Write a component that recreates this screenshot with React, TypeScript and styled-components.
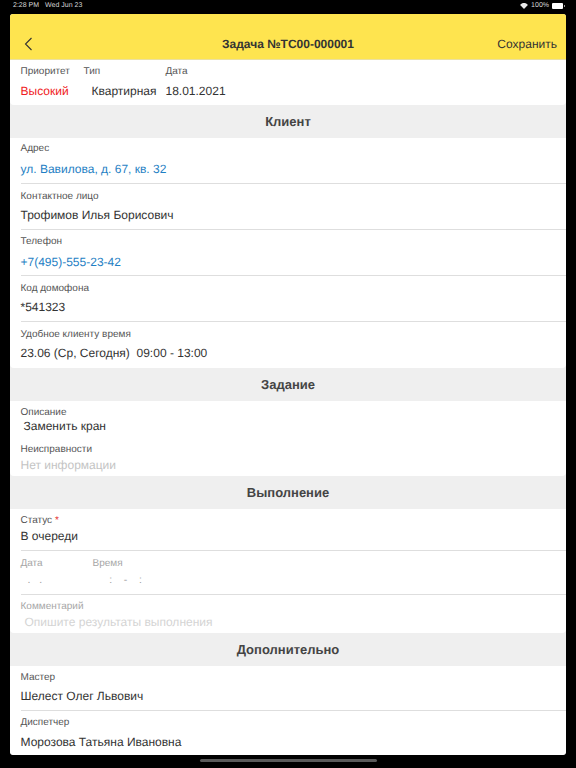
import React from 'react'
import styled, { createGlobalStyle } from 'styled-components'

const GlobalStyle = createGlobalStyle`
  html, body {
    margin: 0;
    padding: 0;
    background: #000000;
    font-family: "Liberation Sans", Arial, sans-serif;
    text-rendering: geometricPrecision;
  }
`

const Screen = styled.div`
  width: 576px;
  height: 768px;
  background: #000000;
  display: flex;
  flex-direction: column;
  overflow: hidden;
`

const StatusBar = styled.div`
  height: 14px;
  flex: none;
  box-sizing: border-box;
  padding: 0 13px 3px 13px;
  display: flex;
  align-items: center;
  justify-content: space-between;
  color: #d8d8d8;
  font-size: 7px;
`

const StatusGroup = styled.div<{ $gap: number }>`
  display: flex;
  align-items: center;
  gap: ${p => p.$gap}px;
`

const Sheet = styled.div`
  margin: 0 10px;
  height: 741px;
  flex: none;
  background: #efefef;
  border-radius: 3px;
  overflow: hidden;
  display: flex;
  flex-direction: column;
`

const Header = styled.div`
  height: 46px;
  flex: none;
  box-sizing: border-box;
  padding: 14px 9px 0 9px;
  background: #fee44f;
  border-bottom: 1px solid #ebe0a0;
  display: grid;
  grid-template-columns: 1fr auto 1fr;
  align-items: center;
  color: #333333;
`

const BackWrap = styled.div`
  display: flex;
  align-items: center;
  padding-left: 5px;
`

const Title = styled.div`
  font-size: 12px;
  font-weight: 700;
`

const Save = styled.div`
  font-size: 12px;
  text-align: right;
`

const Card = styled.div`
  background: #ffffff;
  flex: none;
  border-radius: 0 0 4px 4px;
  display: flex;
  flex-direction: column;
`

const Heading = styled.div`
  height: 33px;
  flex: none;
  display: flex;
  align-items: center;
  justify-content: center;
  font-size: 13px;
  font-weight: 700;
  color: #444444;
`

const Row = styled.div<{ $h: number; $line?: boolean; $top?: number; $gap?: number }>`
  height: ${p => p.$h}px;
  flex: none;
  box-sizing: border-box;
  margin-left: 10.5px;
  padding-top: ${p => p.$top ?? 7}px;
  border-bottom: ${p => (p.$line ? '1px solid #dedede' : 'none')};
  display: flex;
  flex-direction: column;
  gap: ${p => p.$gap ?? 5}px;
`

const TopRow = styled.div`
  height: 45px;
  box-sizing: border-box;
  padding: 6px 0 0 10.5px;
  display: grid;
  grid-template-columns: 63px 82px 1fr;
  row-gap: 0;
`

const Label = styled.div<{ $muted?: boolean }>`
  font-size: 10px;
  line-height: 12px;
  color: ${p => (p.$muted ? '#a6a6a6' : '#555555')};
`

const Value = styled.div<{ $color?: string; $shift?: number }>`
  font-size: 12px;
  line-height: 15px;
  white-space: pre;
  color: ${p => p.$color ?? '#333333'};
  margin-left: ${p => p.$shift ?? 0}px;
`

const Star = styled.span`
  color: #e53935;
`

const Pair = styled.div`
  display: grid;
  grid-template-columns: 72px 1fr;
`

const Blank = styled.div`
  font-size: 10.5px;
  line-height: 15px;
  color: #a0a0a0;
  white-space: pre;
  padding-left: 7px;
`

const HomeBar = styled.div`
  width: 177px;
  height: 3px;
  margin: 4px auto 0;
  border-radius: 2px;
  background: #5a5a5a;
`

const Battery = styled.div`
  width: 11px;
  height: 6px;
  border-radius: 1px;
  background: #ffffff;
  position: relative;
  &::after {
    content: '';
    position: absolute;
    left: 12px;
    top: 2px;
    width: 1px;
    height: 2px;
    background: #9a9a9a;
  }
`

const Wifi = () => (
  <svg width="8" height="6" viewBox="0 0 18 14" fill="#e8e8e8">
    <path d="M9 14 L0 4.5 C5 -1.5 13 -1.5 18 4.5 Z" />
  </svg>
)

const Back = () => (
  <svg width="9" height="14" viewBox="0 0 9 14" fill="none" stroke="#333333" strokeWidth="1.1">
    <path d="M7.5 1 L1.5 7 L7.5 13" />
  </svg>
)

const BLUE = '#1f7fc4'

const App: React.FC = () => (
  <Screen>
    <GlobalStyle />
    <StatusBar>
      <StatusGroup $gap={6}>
        <span>2:28 PM</span>
        <span>Wed Jun 23</span>
      </StatusGroup>
      <StatusGroup $gap={3}>
        <Wifi />
        <span>100%</span>
        <Battery />
      </StatusGroup>
    </StatusBar>
    <Sheet>
      <Header>
        <BackWrap>
          <Back />
        </BackWrap>
        <Title>Задача №ТС00-000001</Title>
        <Save>Сохранить</Save>
      </Header>
      <Card>
        <TopRow>
          <Label>Приоритет</Label>
          <Label>Тип</Label>
          <Label>Дата</Label>
          <Value $color="#f01c24">Высокий</Value>
          <Value $shift={8}>Квартирная</Value>
          <Value>18.01.2021</Value>
        </TopRow>
      </Card>
      <Heading>Клиент</Heading>
      <Card>
        <Row $h={46} $line $top={5} $gap={7}>
          <Label>Адрес</Label>
          <Value $color={BLUE}>ул. Вавилова, д. 67, кв. 32</Value>
        </Row>
        <Row $h={46} $line>
          <Label>Контактное лицо</Label>
          <Value>Трофимов Илья Борисович</Value>
        </Row>
        <Row $h={46} $line $top={6} $gap={7}>
          <Label>Телефон</Label>
          <Value $color={BLUE}>+7(495)-555-23-42</Value>
        </Row>
        <Row $h={46} $line>
          <Label>Код домофона</Label>
          <Value>*541323</Value>
        </Row>
        <Row $h={46}>
          <Label>Удобное клиенту время</Label>
          <Value>23.06 (Ср, Сегодня)  09:00 - 13:00</Value>
        </Row>
      </Card>
      <Heading>Задание</Heading>
      <Card>
        <Row $h={37} $top={6} $gap={0}>
          <Label>Описание</Label>
          <Value $shift={3}>Заменить кран</Value>
        </Row>
        <Row $h={38} $top={6} $gap={2}>
          <Label>Неисправности</Label>
          <Value $color="#c4c4c4">Нет информации</Value>
        </Row>
      </Card>
      <Heading>Выполнение</Heading>
      <Card>
        <Row $h={42} $line $top={6} $gap={2}>
          <Label>Статус <Star>*</Star></Label>
          <Value>В очереди</Value>
        </Row>
        <Row $h={44} $line $gap={3}>
          <Pair>
            <Label $muted>Дата</Label>
            <Label $muted>Время</Label>
          </Pair>
          <Blank>{'.   .                       :    -    :'}</Blank>
        </Row>
        <Row $h={38} $top={6} $gap={2}>
          <Label $muted>Комментарий</Label>
          <Value $color="#d4d4d4" $shift={4}>Опишите результаты выполнения</Value>
        </Row>
      </Card>
      <Heading>Дополнительно</Heading>
      <Card>
        <Row $h={45} $line $top={6} $gap={5}>
          <Label>Мастер</Label>
          <Value>Шелест Олег Львович</Value>
        </Row>
        <Row $h={44} $top={6} $gap={6}>
          <Label>Диспетчер</Label>
          <Value>Морозова Татьяна Ивановна</Value>
        </Row>
      </Card>
    </Sheet>
    <HomeBar />
  </Screen>
)

export default App
